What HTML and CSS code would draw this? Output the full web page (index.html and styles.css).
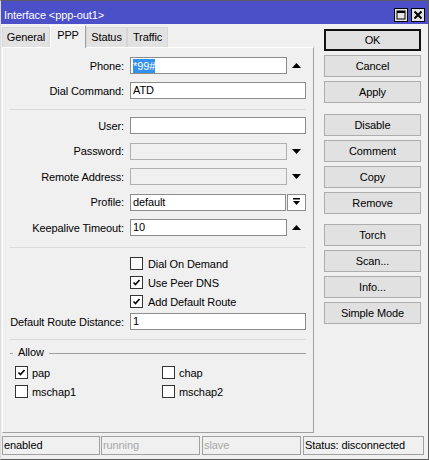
FILE: index.html
```html
<!DOCTYPE html>
<html lang="en">
  <head>
    <meta charset="UTF-8" />
    <title>Interface &lt;ppp-out1&gt;</title>
    <link rel="stylesheet" href="styles.css">
  </head>
  <body>
    <div class="window">
      <div class="titlebar">
        <span class="title">Interface &lt;ppp-out1&gt;</span>
        <div class="wbtns">
          <span class="wbtn">
            <svg width="10" height="10" viewBox="0 0 10 10"><rect x="1" y="1" width="8" height="8" fill="none" stroke="#000" stroke-width="1"/><rect x="1" y="1" width="8" height="2" fill="#000"/></svg>
          </span>
          <span class="wbtn">
            <svg width="10" height="10" viewBox="0 0 10 10"><path d="M1.5 1.5 L8.5 8.5 M8.5 1.5 L1.5 8.5" stroke="#000" stroke-width="2"/></svg>
          </span>
        </div>
      </div>

      <div class="content">
        <div class="main">
          <div class="tabs">
            <div class="tab w-general">General</div>
            <div class="tab active w-ppp">PPP</div>
            <div class="tab w-status">Status</div>
            <div class="tab w-traffic">Traffic</div>
          </div>

          <div class="panel">
            <div class="rows">
              <div class="row">
                <span class="label">Phone:</span>
                <div class="field"><span class="sel">*99#</span></div>
                <span class="arrow"><svg width="9" height="5" viewBox="0 0 9 5"><polygon points="0,5 9,5 4.5,0" fill="#000"/></svg></span>
              </div>
              <div class="row">
                <span class="label">Dial Command:</span>
                <div class="field">ATD</div>
              </div>
            </div>

            <div class="sep sep-a"></div>

            <div class="rows rows-wide">
              <div class="row">
                <span class="label">User:</span>
                <div class="field"></div>
              </div>
              <div class="row">
                <span class="label">Password:</span>
                <div class="field dis"></div>
                <span class="arrow"><svg width="9" height="5" viewBox="0 0 9 5"><polygon points="0,0 9,0 4.5,5" fill="#000"/></svg></span>
              </div>
              <div class="row">
                <span class="label">Remote Address:</span>
                <div class="field dis"></div>
                <span class="arrow"><svg width="9" height="5" viewBox="0 0 9 5"><polygon points="0,0 9,0 4.5,5" fill="#000"/></svg></span>
              </div>
              <div class="row">
                <span class="label">Profile:</span>
                <div class="field short">default</div>
                <span class="dropbtn"><svg width="7" height="8" viewBox="0 0 7 8"><rect x="0" y="0" width="7" height="1.5" fill="#000"/><polygon points="0,3 7,3 3.5,7" fill="#000"/></svg></span>
              </div>
              <div class="row">
                <span class="label">Keepalive Timeout:</span>
                <div class="field">10</div>
                <span class="arrow"><svg width="9" height="5" viewBox="0 0 9 5"><polygon points="0,5 9,5 4.5,0" fill="#000"/></svg></span>
              </div>
            </div>

            <div class="sep sep-b"></div>

            <div class="checks">
              <div class="crow"><span class="check"></span>Dial On Demand</div>
              <div class="crow"><span class="check"><svg width="9" height="9" viewBox="0 0 9 9"><path d="M1.5 4.5 L3.5 6.5 L7.5 2" fill="none" stroke="#000" stroke-width="1.6"/></svg></span>Use Peer DNS</div>
              <div class="crow"><span class="check"><svg width="9" height="9" viewBox="0 0 9 9"><path d="M1.5 4.5 L3.5 6.5 L7.5 2" fill="none" stroke="#000" stroke-width="1.6"/></svg></span>Add Default Route</div>
            </div>

            <div class="row row-drd">
              <span class="label">Default Route Distance:</span>
              <div class="field">1</div>
            </div>

            <div class="sep sep-c"></div>

            <div class="group-head"><span>Allow</span></div>
            <div class="allow">
              <div class="arow"><span class="check"><svg width="9" height="9" viewBox="0 0 9 9"><path d="M1.5 4.5 L3.5 6.5 L7.5 2" fill="none" stroke="#000" stroke-width="1.6"/></svg></span>pap</div>
              <div class="arow"><span class="check"></span>chap</div>
              <div class="arow"><span class="check"></span>mschap1</div>
              <div class="arow"><span class="check"></span>mschap2</div>
            </div>
          </div>
        </div>

        <div class="side">
          <div class="btn default">OK</div>
          <div class="btn">Cancel</div>
          <div class="btn">Apply</div>
          <div class="btn spaced">Disable</div>
          <div class="btn">Comment</div>
          <div class="btn">Copy</div>
          <div class="btn">Remove</div>
          <div class="btn spaced">Torch</div>
          <div class="btn">Scan...</div>
          <div class="btn">Info...</div>
          <div class="btn">Simple Mode</div>
        </div>
      </div>

      <div class="status">
        <div class="cell c1">enabled</div>
        <div class="cell c2 dim">running</div>
        <div class="cell c3 dim">slave</div>
        <div class="cell c4">Status: disconnected</div>
      </div>
    </div>
  </body>
</html>
```

FILE: styles.css
```css
body {
  margin: 0;
  font-family: "Liberation Sans", Arial, sans-serif;
  font-size: 11px;
  letter-spacing: -0.1px;
  color: #000;
  background: #f0f0f0;
}

.window {
  width: 429px;
  height: 460px;
  box-sizing: border-box;
  border: 1px solid #5c5c5c;
  border-left-color: #dcdcdc;
  background: #f0f0f0;
  display: flex;
  flex-direction: column;
}

/* barra de titulo */
.titlebar {
  height: 23px;
  box-sizing: border-box;
  padding: 5px 3px 0 3px;
  background: #4b4fc8;
  color: #fff;
  display: flex;
  align-items: center;
  justify-content: space-between;
}

.wbtns {
  display: flex;
  gap: 3px;
}

.wbtn {
  width: 14px;
  height: 14px;
  box-sizing: border-box;
  border: 1px solid #000;
  background: #e4e4e4;
  display: flex;
  align-items: center;
  justify-content: center;
}

.content {
  display: flex;
  padding: 1px 0 0 1px;
}

.main {
  width: 312px;
  display: flex;
  flex-direction: column;
}

/* pestañas */
.tabs {
  display: flex;
  align-items: flex-end;
  height: 22px;
}

.tab {
  height: 20px;
  box-sizing: border-box;
  border: 1px solid #d6d6d6;
  border-bottom: none;
  background: #e2e2e2;
  text-align: center;
  line-height: 19px;
}

.tab.active {
  height: 23px;
  margin-bottom: -1px;
  background: #f0f0f0;
  border-color: #fff #a0a0a0 #f0f0f0 #fff;
  line-height: 19px;
  position: relative;
  z-index: 1;
}

.w-general { width: 48px; }
.w-ppp { width: 36px; }
.w-status { width: 41px; }
.w-traffic { width: 41px; }

.panel {
  height: 386px;
  box-sizing: border-box;
  border: 1px solid;
  border-color: #fff #a0a0a0 #a0a0a0 #fff;
  padding: 9px 7px 0 0;
  display: flex;
  flex-direction: column;
}

.rows {
  display: flex;
  flex-direction: column;
  gap: 8px;
}

.rows-wide {
  gap: 8.5px;
}

.row {
  display: flex;
  align-items: center;
  height: 17px;
}

.label {
  width: 121px;
  margin-right: 6px;
  text-align: right;
  white-space: nowrap;
}

.field {
  flex: 1;
  height: 17px;
  box-sizing: border-box;
  border: 1px solid #8c8c8c;
  background: #fff;
  padding: 0 2px;
  line-height: 15px;
  white-space: nowrap;
}

.field.dis {
  background: #f0f0f0;
  border-color: #b0b0b0;
}

.field.short {
  flex: none;
  width: 156px;
  margin-right: 1px;
}

.sel {
  display: inline-block;
  background: #3390f0;
  color: #fff;
  line-height: 14px;
  margin-top: 1px;
  vertical-align: top;
}

.arrow {
  width: 19px;
  display: flex;
  justify-content: center;
}

.dropbtn {
  width: 19px;
  height: 17px;
  box-sizing: border-box;
  border: 1px solid #8c8c8c;
  background: #fff;
  display: flex;
  align-items: center;
  justify-content: center;
}

.sep {
  height: 1px;
  background: #dadada;
  margin-left: 7px;
}

.sep-a { margin-top: 10px; margin-bottom: 7px; }
.sep-b { margin-top: 11px; margin-bottom: 9px; }
.sep-c { margin-top: 9px; margin-bottom: 6px; }

/* casillas */
.checks {
  display: flex;
  flex-direction: column;
  gap: 6px;
  padding-left: 127px;
}

.crow,
.arow {
  display: flex;
  align-items: center;
  height: 13px;
  white-space: nowrap;
}

.check {
  width: 13px;
  height: 13px;
  box-sizing: border-box;
  border: 1px solid #333;
  background: #fff;
  margin-right: 5px;
  display: flex;
  align-items: center;
  justify-content: center;
}

.arow .check {
  margin-right: 4px;
}

.row-drd {
  margin-top: 5px;
}

.group-head {
  display: flex;
  align-items: flex-start;
  height: 12px;
  line-height: 12px;
  margin-left: 7px;
}

.group-head::before,
.group-head::after {
  content: "";
  height: 1px;
  margin-top: 7px;
  background: #a0a0a0;
}

.group-head::before {
  width: 3px;
}

.group-head::after {
  flex: 1;
}

.group-head span {
  padding: 0 5px;
}

.allow {
  display: grid;
  grid-template-columns: 147px 1fr;
  row-gap: 6px;
  padding-left: 12px;
  margin-top: 8px;
}

/* botones laterales */
.side {
  width: 97px;
  margin: 4px 0 0 10px;
  display: flex;
  flex-direction: column;
  gap: 4px;
}

.btn {
  height: 22px;
  box-sizing: border-box;
  border: 1px solid #adadad;
  background: #e1e1e1;
  text-align: center;
  line-height: 20px;
}

.btn.default {
  border: 2px solid #111;
  line-height: 18px;
}

.btn.spaced {
  margin-top: 6.5px;
}

/* barra de estado */
.status {
  display: flex;
  height: 19px;
  margin: 3px 0 4px 1px;
}

.cell {
  box-sizing: border-box;
  border: 1px solid #a0a0a0;
  padding-left: 1px;
  line-height: 17px;
  white-space: nowrap;
}

.c1 { width: 98px; margin-right: 1px; }
.c2 { width: 99px; margin-right: 2px; }
.c3 { width: 99px; margin-right: 2px; }
.c4 { width: 121px; }

.dim {
  color: #a8a8a8;
}
```
